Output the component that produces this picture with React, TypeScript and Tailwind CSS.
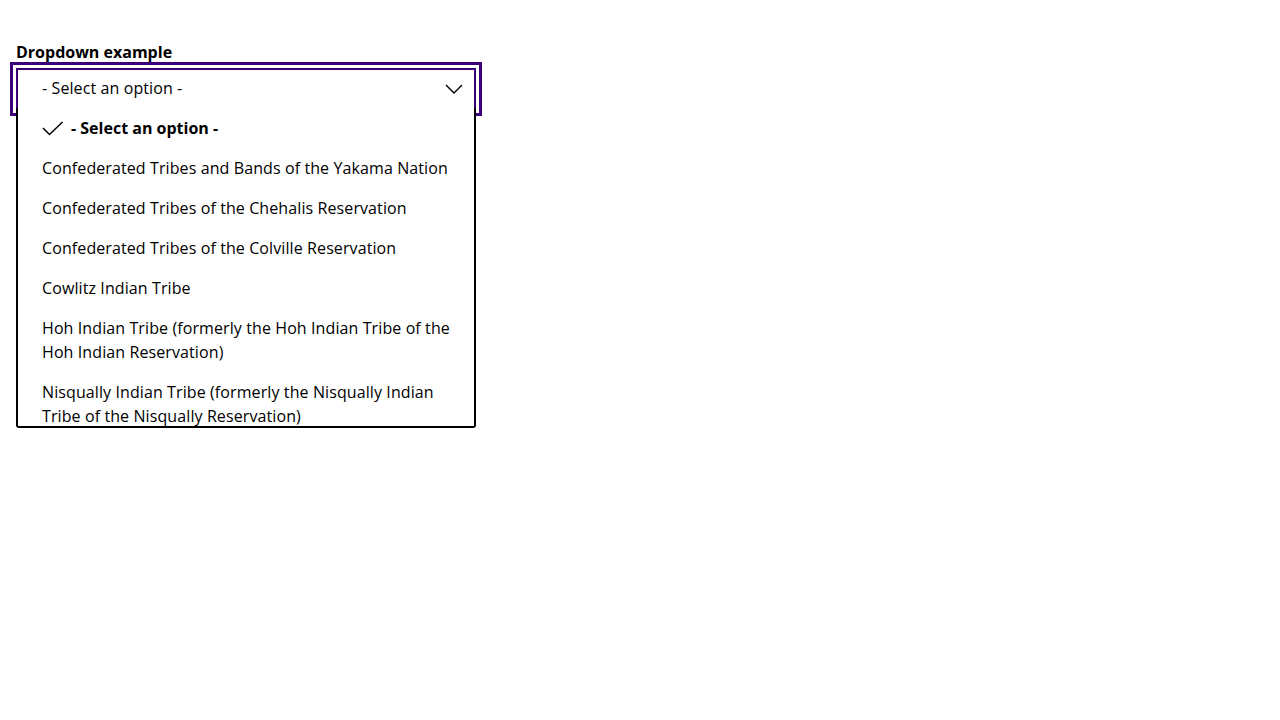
import React from "react";

const options = [
  "Confederated Tribes and Bands of the Yakama Nation",
  "Confederated Tribes of the Chehalis Reservation",
  "Confederated Tribes of the Colville Reservation",
  "Cowlitz Indian Tribe",
  "Hoh Indian Tribe (formerly the Hoh Indian Tribe of the Hoh Indian Reservation)",
  "Nisqually Indian Tribe (formerly the Nisqually Indian Tribe of the Nisqually Reservation)",
  "Nooksack Indian Tribe of Washington",
  "Port Gamble S'Klallam Tribe",
];

export default function App() {
  return (
    <div
      className="min-h-[720px] w-[1280px] bg-white pl-4 pt-10 text-black"
      style={{ fontFamily: '"Open Sans", "Noto Sans", sans-serif' }}
    >
      <div className="w-[460px]">
        <div className="text-base font-bold leading-6">Dropdown example</div>
        <div className="relative mt-1">
          <div className="flex h-[42px] items-center justify-between border-2 border-[#3b0078] pb-[2px] pl-6 pr-[11px] outline outline-[3px] outline-offset-[3px] outline-[#3b0078]">
            <span className="text-base leading-6 tracking-[0.1px]">- Select an option -</span>
            <svg width="18" height="10" viewBox="0 0 18 10" fill="none" className="mt-[2px]">
              <path d="M1 1 L9 9 L17 1" stroke="#000" strokeWidth="1.4" />
            </svg>
          </div>
          <ul className="absolute left-0 top-[40px] z-10 h-[320px] w-[460px] overflow-hidden rounded-b-[3px] border-2 border-t-0 border-black bg-white">
            <li className="flex items-start py-2 pl-6 pr-6 text-base font-bold leading-6">
              <svg width="22" height="16" viewBox="0 0 22 16" fill="none" className="mt-[5px] mr-[7px] shrink-0">
                <path d="M1 7 L7.5 13.5 L20.5 1" stroke="#000" strokeWidth="1.5" />
              </svg>
              - Select an option -
            </li>
            {options.map((o) => (
              <li key={o} className="py-2 pl-6 pr-6 text-base leading-6 tracking-[0.1px]">
                {o}
              </li>
            ))}
          </ul>
        </div>
      </div>
    </div>
  );
}
